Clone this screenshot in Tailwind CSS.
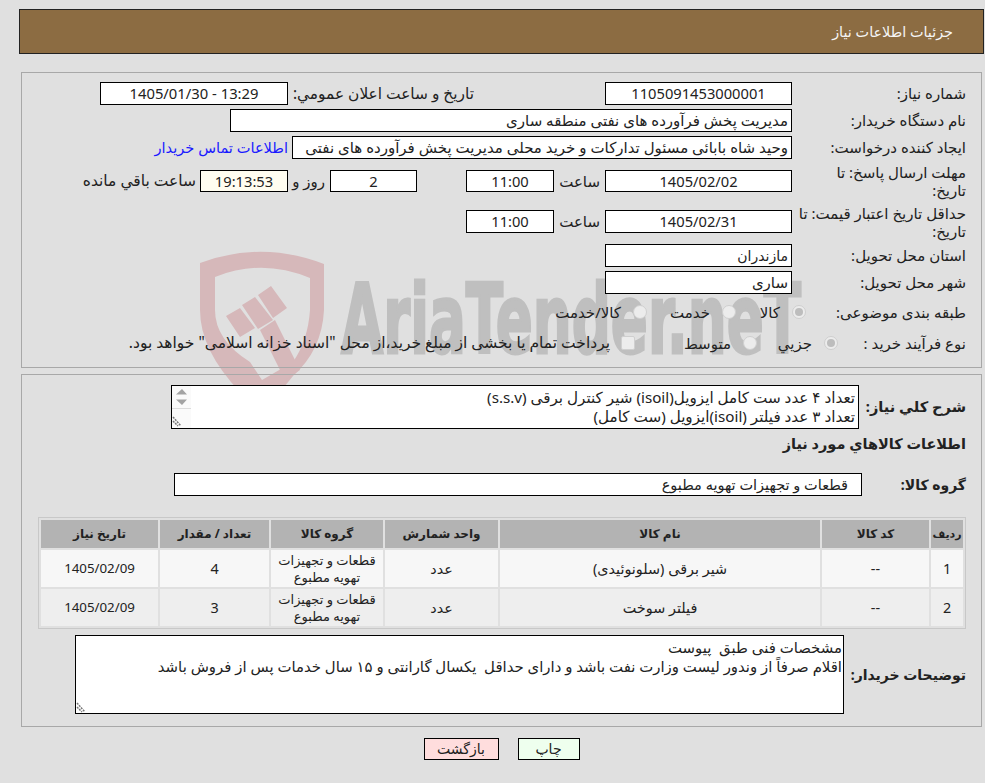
<!DOCTYPE html>
<html lang="fa" dir="rtl">
<head>
    <meta charset="UTF-8" />
    <title>جزئیات اطلاعات نیاز</title>
    <script src="https://cdn.jsdelivr.net/npm/@tailwindcss/browser@4"></script>
</head>
<body class="relative h-[783px] w-[985px] overflow-hidden bg-[#e0e0e0] text-[15px] text-[#222] font-['Noto_Sans','DejaVu_Sans',sans-serif]">

    <!-- watermark behind the form -->
    <svg class="absolute left-0 top-0 z-0 [direction:ltr]" width="985" height="783" viewBox="0 0 985 783">
        <path fill="#d6b8ba" fill-rule="evenodd" d="M200 263 Q262 240 324 264 V310 Q322 350 293 376 L280 392 H240 Q200 350 200 310 Z M215 277 Q262 258 310 278 V310 Q308 340 293 362 L262 380 L250 362 Q215 340 215 310 Z" />
        <path fill="#d6b8ba" d="M226 316 L240 308 L255 328 L240 337 Z M242 305 L255 297 L273 320 L258 329 Z M258 295 L271 286 L287 308 L273 318 Z M260 330 L275 320 L300 370 L285 380 Z" />
        <text x="341" y="353" font-family="DejaVu Sans" font-weight="700" font-size="96" fill="#bfbfbf" stroke="#bfbfbf" stroke-width="3" textLength="460" lengthAdjust="spacingAndGlyphs">AriaTender.neT</text>
    </svg>

    <div class="relative z-10">
        <!-- page title -->
        <div class="mr-px mt-[9px] flex h-[45px] w-[965px] items-center border border-[#222] bg-[#8c6c42] pr-[30px] text-[14.4px] text-[#f5f5f5]">جزئیات اطلاعات نیاز</div>

        <!-- first panel -->
        <section class="mr-[3px] mt-[18px] h-[296px] w-[961px] border border-[#a8a8a8] pr-[15px] pt-[9px]">
            <div class="flex h-[23px] items-center">
                <span class="w-[174px]">شماره نیاز:</span>
                <div class="flex h-[23px] w-[187px] items-center justify-center border border-black bg-white text-[14.7px]">1105091453000001</div>
                <span class="mr-[131px] w-[186px] whitespace-nowrap text-[15.4px]">تاریخ و ساعت اعلان عمومي:</span>
                <div class="flex h-[23px] w-[188px] items-center justify-center border border-black bg-white text-[14.8px]" dir="ltr">1405/01/30 - 13:29</div>
            </div>
            <div class="mt-[4px] flex h-[23px] items-center">
                <span class="w-[174px]">نام دستگاه خریدار:</span>
                <div class="flex h-[23px] w-[562px] items-center border border-black bg-white pr-[3px]">مدیریت پخش فرآورده های نفتی منطقه ساری</div>
            </div>
            <div class="mt-[4px] flex h-[23px] items-center">
                <span class="w-[174px]">ایجاد کننده درخواست:</span>
                <div class="h-[23px] w-[500px] overflow-hidden whitespace-nowrap border border-black bg-white pr-[3px] leading-[21px]">وحید شاه بابائی مسئول تدارکات و خرید محلی مدیریت پخش فرآورده های نفتی</div>
                <a class="mr-[4px] whitespace-nowrap text-[14.6px] text-[#1a1aff]" href="#">اطلاعات تماس خریدار</a>
            </div>
            <div class="mt-[4px] flex h-[36px] items-center">
                <span class="w-[174px] leading-[18px]">مهلت ارسال پاسخ: تا<br />تاریخ:</span>
                <div class="flex h-[22px] w-[187px] items-center justify-center border border-black bg-white text-[14.7px]">1405/02/02</div>
                <span class="w-[51px] pr-[5px]">ساعت</span>
                <div class="flex h-[22px] w-[88px] items-center justify-center border border-black bg-white text-[14.7px]">11:00</div>
                <div class="mr-[49px] flex h-[22px] w-[87px] items-center justify-center border border-black bg-white text-[14.7px]">2</div>
                <span class="w-[42px] pr-[5px]">روز و</span>
                <div class="flex h-[22px] w-[88px] items-center justify-center border border-black bg-[#fffdf0] text-[14.7px]">19:13:53</div>
                <span class="whitespace-nowrap pr-[4px] text-[15.5px]">ساعت باقي مانده</span>
            </div>
            <div class="mt-[4px] flex h-[37px] items-center">
                <span class="w-[174px] leading-[18px]">حداقل تاریخ اعتبار قیمت: تا<br />تاریخ:</span>
                <div class="flex h-[23px] w-[187px] items-center justify-center border border-black bg-white text-[14.7px]">1405/02/31</div>
                <span class="w-[51px] pr-[5px]">ساعت</span>
                <div class="flex h-[23px] w-[88px] items-center justify-center border border-black bg-white text-[14.7px]">11:00</div>
            </div>
            <div class="mt-[4px] flex h-[23px] items-center">
                <span class="w-[174px]">استان محل تحویل:</span>
                <div class="flex h-[23px] w-[187px] items-center border border-black bg-white pr-[3px] text-[14px]">مازندران</div>
            </div>
            <div class="mt-[4px] flex h-[23px] items-center">
                <span class="w-[174px]">شهر محل تحویل:</span>
                <div class="flex h-[23px] w-[187px] items-center border border-black bg-white pr-[3px]">ساری</div>
            </div>
            <div class="mt-[5px] flex h-[26px] items-center">
                <span class="w-[160px]">طبقه بندی موضوعی:</span>
                <div class="flex w-[70px] items-center">
                    <span class="flex h-[14px] w-[14px] items-center justify-center rounded-full border border-[#cfcfcf] bg-[#ececec]"><span class="h-[8px] w-[8px] rounded-full bg-[#bdbdbd]"></span></span>
                    <span class="mr-[12px]">کالا</span>
                </div>
                <div class="flex w-[89px] items-center">
                    <span class="h-[14px] w-[14px] rounded-full border border-[#cfcfcf] bg-[#ececec]"></span>
                    <span class="mr-[12px]">خدمت</span>
                </div>
                <div class="flex items-center">
                    <span class="h-[14px] w-[14px] rounded-full border border-[#cfcfcf] bg-[#ececec]"></span>
                    <span class="mr-[12px]">کالا/خدمت</span>
                </div>
            </div>
            <div class="mt-[5px] flex h-[26px] items-center">
                <span class="w-[128px]">نوع فرآیند خرید :</span>
                <div class="flex w-[81px] items-center">
                    <span class="flex h-[14px] w-[14px] items-center justify-center rounded-full border border-[#cfcfcf] bg-[#ececec]"><span class="h-[8px] w-[8px] rounded-full bg-[#bdbdbd]"></span></span>
                    <span class="mr-[12px]">جزيي</span>
                </div>
                <div class="flex w-[122px] items-center">
                    <span class="h-[14px] w-[14px] rounded-full border border-[#cfcfcf] bg-[#ececec]"></span>
                    <span class="mr-[12px]">متوسط</span>
                </div>
                <span class="h-[14px] w-[14px] rounded-[2px] border border-[#cfcfcf] bg-[#ececec]"></span>
                <span class="mr-[11px] whitespace-nowrap text-[15.5px]">پرداخت تمام یا بخشی از مبلغ خرید،از محل "اسناد خزانه اسلامی" خواهد بود.</span>
            </div>
        </section>

        <!-- second panel -->
        <section class="mr-[3px] mt-[6px] h-[353px] w-[961px] border border-[#a8a8a8] pr-[15px] pt-[10px]">
            <div class="flex h-[44px] items-center">
                <span class="w-[107px] text-[14.6px] font-bold">شرح کلي نياز:</span>
                <div class="relative h-[44px] w-[688px] overflow-hidden border border-black bg-white pr-[3px] pt-[2px] text-[15.2px] leading-[19px]">
                    <div class="whitespace-nowrap">تعداد ۴ عدد ست کامل ایزویل(isoil) شیر کنترل برقی (s.s.v)</div>
                    <div class="whitespace-nowrap">تعداد ۳ عدد فیلتر (isoil)ایزویل (ست کامل)</div>
                    <!-- scrollbar on the left -->
                    <svg class="absolute bottom-0 left-0" width="19" height="42" viewBox="0 0 19 42">
                        <rect width="19" height="42" fill="#fafafa" />
                        <path d="M10 3 L15 8.5 H4 Z M4 13.5 H15 L10 19 Z" fill="#a3a3a3" />
                        <path d="M0 22.5 H19" stroke="#dcdcdc" />
                        <path d="M1 31 L9 40 M1 35 L6 40" stroke="#777" stroke-width="1.5" stroke-dasharray="2 1" fill="none" />
                    </svg>
                </div>
            </div>
            <div class="mt-[3px] flex h-[24px] items-center text-[14.5px] font-bold">اطلاعات کالاهاي مورد نياز</div>
            <div class="mt-[17px] flex h-[23px] items-center">
                <span class="w-[104px] text-[14px] font-bold">گروه کالا:</span>
                <div class="flex h-[23px] w-[688px] items-center border border-black bg-white pr-[13px] text-[14.5px]">قطعات و تجهیزات تهویه مطبوع</div>
            </div>

            <div class="mt-[21px] w-[928px] border border-[#c8c8c8]">
                <table class="w-[926px] table-fixed border-separate border-spacing-[2px] text-center text-[14.4px]">
                    <colgroup>
                        <col class="w-[32px]" /><col class="w-[107px]" /><col class="w-[320px]" /><col class="w-[113px]" /><col class="w-[112px]" /><col class="w-[109px]" /><col class="w-[117px]" />
                    </colgroup>
                    <thead>
                        <tr class="h-[28px] bg-[#b3b3b3] text-[12px] font-bold">
                            <th class="text-[11px]">ردیف</th><th>کد کالا</th><th>نام کالا</th><th>واحد شمارش</th><th>گروه کالا</th><th>تعداد / مقدار</th><th>تاریخ نیاز</th>
                        </tr>
                    </thead>
                    <tbody>
                        <tr class="h-[37px] bg-[#f7f7f7]">
                            <td>1</td><td>--</td><td>شیر برقی (سلونوئیدی)</td><td>عدد</td><td class="text-[13px] leading-[17px]">قطعات و تجهیزات تهویه مطبوع</td><td>4</td><td class="text-[13.3px]">1405/02/09</td>
                        </tr>
                        <tr class="h-[37px] bg-[#eeeeee]">
                            <td>2</td><td>--</td><td>فیلتر سوخت</td><td>عدد</td><td class="text-[13px] leading-[17px]">قطعات و تجهیزات تهویه مطبوع</td><td>3</td><td class="text-[13.3px]">1405/02/09</td>
                        </tr>
                    </tbody>
                </table>
            </div>

            <div class="mt-[6px] flex h-[79px] items-center">
                <span class="w-[122px] whitespace-nowrap text-[14px] font-bold">توضیحات خریدار:</span>
                <div class="relative h-[79px] w-[769px] border border-black bg-white pr-[1px] pt-[2px] text-[14.9px] leading-[19px]">
                    <div class="whitespace-pre">مشخصات فنی طبق  پیوست</div>
                    <div class="whitespace-pre">اقلام صرفاً از وندور لیست وزارت نفت باشد و دارای حداقل  یکسال گارانتی و ۱۵ سال خدمات پس از فروش باشد</div>
                    <svg class="absolute bottom-0 left-0" width="12" height="12" viewBox="0 0 12 12">
                        <path d="M1 2 L9 11 M1 6 L6 11" stroke="#777" stroke-width="1.5" stroke-dasharray="2 1" fill="none" />
                    </svg>
                </div>
            </div>
        </section>

        <!-- actions -->
        <div class="mt-[11px] flex justify-center gap-[19px] pl-[18px]">
            <button class="h-[22px] w-[62px] border border-black bg-[#eeffee] text-[14px] leading-none">چاپ</button>
            <button class="h-[22px] w-[75px] border border-black bg-[#ffdddd] text-[14px] leading-none">بازگشت</button>
        </div>
    </div>
</body>
</html>
